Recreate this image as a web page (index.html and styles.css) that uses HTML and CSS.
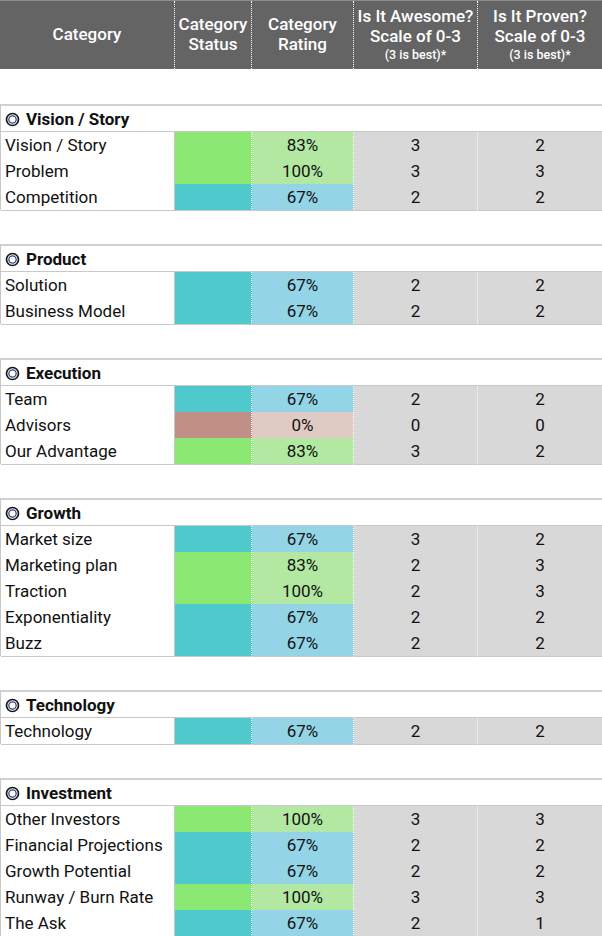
FILE: index.html
```html
<!DOCTYPE html>
<html>
<head>
<meta charset="utf-8">
<link rel="stylesheet" href="styles.css">
</head>
<body>
<div class="sheet">
  <div class="head">
    <div class="hc hc-cat">Category</div>
    <div class="hc">Category<br>Status</div>
    <div class="hc">Category<br>Rating</div>
    <div class="hc">Is It Awesome?<br>Scale of 0-3<span class="small">(3 is best)*</span></div>
    <div class="hc hc-last">Is It Proven?<br>Scale of 0-3<span class="small">(3 is best)*</span></div>
  </div>

  <div class="section">
    <div class="sec-head"><svg class="ico" viewBox="0 0 16 16"><circle cx="8" cy="8" r="6.4" fill="none" stroke="#151515" stroke-width="1.8"/><circle cx="8" cy="8" r="3.9" fill="none" stroke="#34467e" stroke-width="1.4"/></svg>Vision / Story</div>
    <div class="row"><div class="c cat">Vision / Story</div><div class="c st g"></div><div class="c rt lg">83%</div><div class="c n">3</div><div class="c n last">2</div></div>
    <div class="row"><div class="c cat">Problem</div><div class="c st g"></div><div class="c rt lg">100%</div><div class="c n">3</div><div class="c n last">3</div></div>
    <div class="row end"><div class="c cat">Competition</div><div class="c st t"></div><div class="c rt lb">67%</div><div class="c n">2</div><div class="c n last">2</div></div>
  </div>

  <div class="section">
    <div class="sec-head"><svg class="ico" viewBox="0 0 16 16"><circle cx="8" cy="8" r="6.4" fill="none" stroke="#151515" stroke-width="1.8"/><circle cx="8" cy="8" r="3.9" fill="none" stroke="#34467e" stroke-width="1.4"/></svg>Product</div>
    <div class="row"><div class="c cat">Solution</div><div class="c st t"></div><div class="c rt lb">67%</div><div class="c n">2</div><div class="c n last">2</div></div>
    <div class="row end"><div class="c cat">Business Model</div><div class="c st t"></div><div class="c rt lb">67%</div><div class="c n">2</div><div class="c n last">2</div></div>
  </div>

  <div class="section">
    <div class="sec-head"><svg class="ico" viewBox="0 0 16 16"><circle cx="8" cy="8" r="6.4" fill="none" stroke="#151515" stroke-width="1.8"/><circle cx="8" cy="8" r="3.9" fill="none" stroke="#34467e" stroke-width="1.4"/></svg>Execution</div>
    <div class="row"><div class="c cat">Team</div><div class="c st t"></div><div class="c rt lb">67%</div><div class="c n">2</div><div class="c n last">2</div></div>
    <div class="row"><div class="c cat">Advisors</div><div class="c st b"></div><div class="c rt lp">0%</div><div class="c n">0</div><div class="c n last">0</div></div>
    <div class="row end"><div class="c cat">Our Advantage</div><div class="c st g"></div><div class="c rt lg">83%</div><div class="c n">3</div><div class="c n last">2</div></div>
  </div>

  <div class="section">
    <div class="sec-head"><svg class="ico" viewBox="0 0 16 16"><circle cx="8" cy="8" r="6.4" fill="none" stroke="#151515" stroke-width="1.8"/><circle cx="8" cy="8" r="3.9" fill="none" stroke="#34467e" stroke-width="1.4"/></svg>Growth</div>
    <div class="row"><div class="c cat">Market size</div><div class="c st t"></div><div class="c rt lb">67%</div><div class="c n">3</div><div class="c n last">2</div></div>
    <div class="row"><div class="c cat">Marketing plan</div><div class="c st g"></div><div class="c rt lg">83%</div><div class="c n">2</div><div class="c n last">3</div></div>
    <div class="row"><div class="c cat">Traction</div><div class="c st g"></div><div class="c rt lg">100%</div><div class="c n">2</div><div class="c n last">3</div></div>
    <div class="row"><div class="c cat">Exponentiality</div><div class="c st t"></div><div class="c rt lb">67%</div><div class="c n">2</div><div class="c n last">2</div></div>
    <div class="row end"><div class="c cat">Buzz</div><div class="c st t"></div><div class="c rt lb">67%</div><div class="c n">2</div><div class="c n last">2</div></div>
  </div>

  <div class="section">
    <div class="sec-head"><svg class="ico" viewBox="0 0 16 16"><circle cx="8" cy="8" r="6.4" fill="none" stroke="#151515" stroke-width="1.8"/><circle cx="8" cy="8" r="3.9" fill="none" stroke="#34467e" stroke-width="1.4"/></svg>Technology</div>
    <div class="row end"><div class="c cat">Technology</div><div class="c st t"></div><div class="c rt lb">67%</div><div class="c n">2</div><div class="c n last">2</div></div>
  </div>

  <div class="section">
    <div class="sec-head"><svg class="ico" viewBox="0 0 16 16"><circle cx="8" cy="8" r="6.4" fill="none" stroke="#151515" stroke-width="1.8"/><circle cx="8" cy="8" r="3.9" fill="none" stroke="#34467e" stroke-width="1.4"/></svg>Investment</div>
    <div class="row"><div class="c cat">Other Investors</div><div class="c st g"></div><div class="c rt lg">100%</div><div class="c n">3</div><div class="c n last">3</div></div>
    <div class="row"><div class="c cat">Financial Projections</div><div class="c st t"></div><div class="c rt lb">67%</div><div class="c n">2</div><div class="c n last">2</div></div>
    <div class="row"><div class="c cat">Growth Potential</div><div class="c st t"></div><div class="c rt lb">67%</div><div class="c n">2</div><div class="c n last">2</div></div>
    <div class="row"><div class="c cat">Runway / Burn Rate</div><div class="c st g"></div><div class="c rt lg">100%</div><div class="c n">3</div><div class="c n last">3</div></div>
    <div class="row end"><div class="c cat">The Ask</div><div class="c st t"></div><div class="c rt lb">67%</div><div class="c n">2</div><div class="c n last">1</div></div>
  </div>
</div>
</body>
</html>
```

FILE: styles.css
```css
* { box-sizing: border-box; }
html, body { margin: 0; padding: 0; background: #fff; }
body { font-family: Roboto, "Liberation Sans", Arial, sans-serif; color: #111; }
.sheet { width: 602px; }

.head {
  display: grid;
  grid-template-columns: 175px 77px 102px 124px 124px;
  height: 69px;
  background: #646464;
  border-top: 1px solid #8c8c8c;
}
.hc {
  display: flex;
  flex-direction: column;
  align-items: center;
  justify-content: center;
  text-align: center;
  color: #fff;
  font-weight: 500;
  font-size: 17px;
  line-height: 20.5px;
  border-right: 1px dotted #fff;
  padding-bottom: 2px;
}
.hc-last { border-right: none; }
.small { display: block; font-size: 12.5px; line-height: 16px; }

.section {
  margin-top: 34px;
  border-top: 2px solid #d0d0d0;
  border-left: 1px solid #c8c8c8;
}
.head + .section { margin-top: 35px; }
.sec-head {
  height: 26px;
  border-bottom: 1px solid #c8c8c8;
  display: flex;
  align-items: center;
  gap: 6px;
  padding-left: 4px;
  padding-top: 1px;
  font-weight: 700;
  font-size: 17px;
}
.ico { width: 15px; height: 15px; flex: none; }

.row {
  display: grid;
  grid-template-columns: 174px 77px 102px 124px 124px;
  height: 26px;
}
.c {
  font-size: 17px;
  line-height: 26px;
  border-bottom: 1px dotted #fff;
  white-space: nowrap;
}
.cat {
  padding-left: 4px;
  border-right: 1px solid #c8c8c8;
  border-bottom: 1px solid transparent;
}
.st, .rt, .n { border-right: 1px dotted #fff; text-align: center; }
.n { background: #d8d8d8; }
.last { border-right: none; }

.g { background: #8ae873; }
.t { background: #50c9cd; }
.b { background: #c09086; }
.lg { background: #b2e8a2; }
.lb { background: #93d5e6; }
.lp { background: #e0cbc4; }

.row.end .c { border-bottom: 1px solid #c8c8c8; }
```
